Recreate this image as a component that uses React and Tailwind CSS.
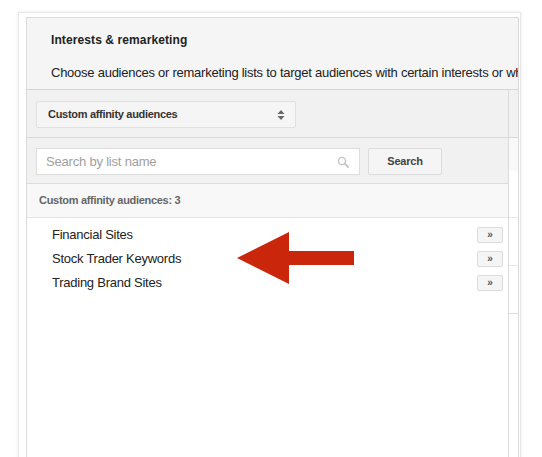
import React from "react";

function UpDown() {
  return (
    <svg width="8" height="12" viewBox="0 0 8 12">
      <path d="M4 1 L7.5 5 L0.5 5 Z" fill="#666" />
      <path d="M4 11 L7.5 7 L0.5 7 Z" fill="#666" />
    </svg>
  );
}

function SearchIcon() {
  return (
    <svg width="12" height="12" viewBox="0 0 12 12">
      <circle cx="5" cy="5" r="3.6" fill="none" stroke="#c4c4c4" strokeWidth="1.4" />
      <path d="M7.7 7.7 L11 11" stroke="#c4c4c4" strokeWidth="1.8" strokeLinecap="round" />
    </svg>
  );
}

const items = ["Financial Sites", "Stock Trader Keywords", "Trading Brand Sites"];

export default function App() {
  return (
    <div className="relative h-[457px] w-[542px] overflow-hidden bg-white font-['Liberation_Sans',Arial,sans-serif]">
      <div className="ml-[18px] mt-[12px] h-[470px] w-[503px] border border-[#e8e8e8] bg-white pl-[7px] pt-[4px] shadow-[0_0_3px_rgba(0,0,0,0.10)]">
        <div className="flex h-[460px] w-[493px] flex-col border border-[#dadada]">
          {/* header */}
          <div className="h-[72px] shrink-0 border-b border-[#d6d6d6] bg-[#f5f5f5] pl-[24px]">
            <div className="pt-[14px] text-[12px] font-bold leading-[16px] tracking-[0.1px] text-[#222]">
              Interests &amp; remarketing
            </div>
            <div className="mt-[17px] overflow-hidden whitespace-nowrap text-[13px] leading-[16px] tracking-[-0.25px] text-[#222]">
              Choose audiences or remarketing lists to target audiences with certain interests or who have visited your site
            </div>
          </div>
          {/* body */}
          <div className="flex flex-1">
            <div className="flex w-[482px] shrink-0 flex-col border-r border-[#dadada]">
              <div className="h-[48px] border-b border-[#d8d8d8] bg-[#f1f1f1] pl-[9px] pt-[11px]">
                <div className="flex h-[27px] w-[260px] items-center justify-between rounded-[2px] border border-[#e0e0e0] bg-[#f5f5f5] pl-[11px] pr-[10px]">
                  <span className="text-[11px] font-bold tracking-[-0.3px] text-[#333]">Custom affinity audiences</span>
                  <UpDown />
                </div>
              </div>
              <div className="flex h-[46px] border-b border-[#dcdcdc] bg-[#f1f1f1] pl-[9px] pt-[10px]">
                <div className="flex h-[27px] w-[324px] items-center justify-between border border-[#dcdcdc] bg-white pl-[9px] pr-[10px]">
                  <span className="text-[13px] tracking-[-0.2px] text-[#a0a0a0]">Search by list name</span>
                  <SearchIcon />
                </div>
                <div className="ml-[8px] flex h-[27px] w-[74px] items-center justify-center rounded-[2px] border border-[#dcdcdc] bg-[#f5f5f5] text-[11px] font-bold tracking-[-0.2px] text-[#444]">
                  Search
                </div>
              </div>
              <div className="flex h-[34px] items-center border-b border-[#e4e4e4] bg-[#f8f8f8] pl-[12px] text-[11px] font-bold tracking-[-0.3px] text-[#666]">
                Custom affinity audiences: 3
              </div>
              <div className="flex-1 bg-white pt-[5px]">
                {items.map((t) => (
                  <div key={t} className="flex h-[24px] items-center justify-between pl-[25px] pr-[5px]">
                    <span className="text-[13px] tracking-[-0.25px] text-[#222]">{t}</span>
                    <div className="flex h-[16px] w-[26px] items-center justify-center rounded-[2px] border border-[#dcdcdc] bg-[#f5f5f5] text-[10px] font-bold leading-none text-[#555]">
                      »
                    </div>
                  </div>
                ))}
              </div>
            </div>
            <div className="flex flex-1 flex-col">
              <div className="h-[48px] border-b border-[#d8d8d8] bg-[#f1f1f1]" />
              <div className="h-[33px] bg-[#f9f9f9]" />
              <div className="h-[47px] border-b border-[#e8e8e8]" />
              <div className="h-[48px] border-b border-[#e8e8e8]" />
              <div className="h-[48px] border-b border-[#dcdcdc]" />
              <div className="flex-1" />
            </div>
          </div>
        </div>
      </div>
      {/* red arrow annotation */}
      <svg className="absolute left-[236px] top-[231px]" width="120" height="54" viewBox="0 0 120 54">
        <polygon points="1,27 53,1 53,20 118,20 118,34 53,34 53,53" fill="#c9260c" />
      </svg>
    </div>
  );
}
